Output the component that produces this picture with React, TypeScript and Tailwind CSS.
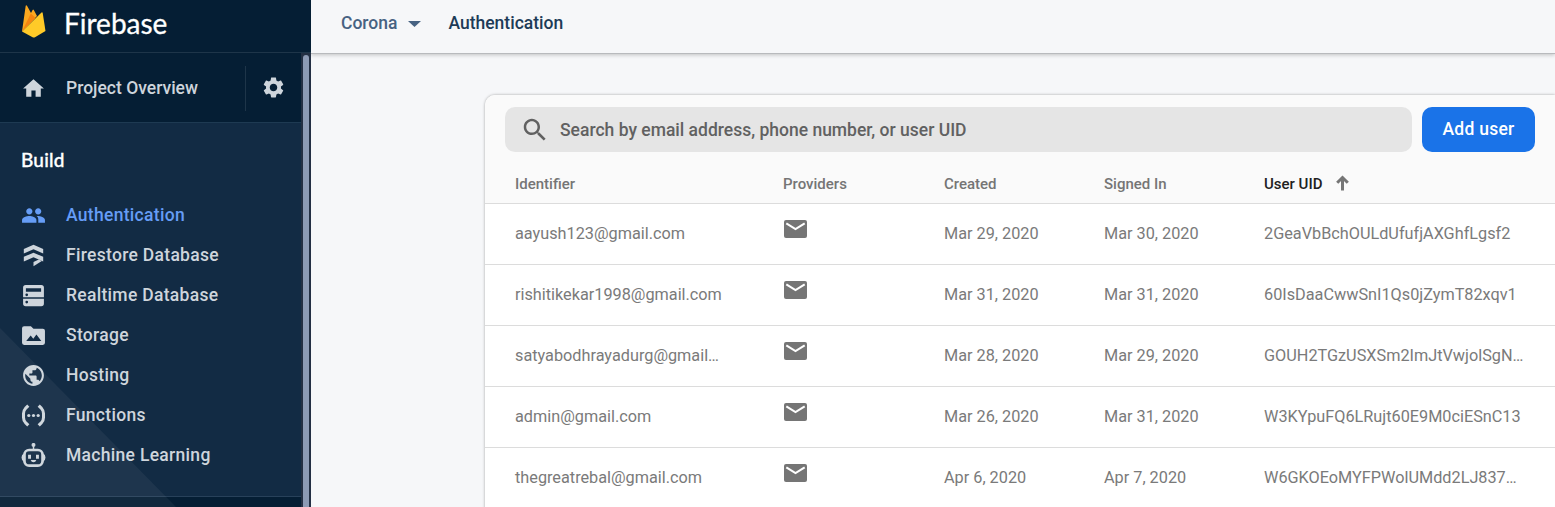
import type { ReactNode } from "react";

const Svg = ({ children, className = "size-[25px]" }: { children: ReactNode; className?: string }) => (
  <svg viewBox="0 0 24 24" fill="currentColor" className={`shrink-0 ${className}`}>
    {children}
  </svg>
);

const navItems: { label: string; active?: boolean; icon: ReactNode }[] = [
  {
    label: "Authentication",
    active: true,
    icon: (
      <path d="M16.500 11c1.660 0 2.990-1.340 2.990-3S18.160 5 16.500 5c-1.660 0-3 1.340-3 3s1.340 3 3 3zm-8.500 0c1.660 0 2.990-1.340 2.990-3S9.660 5 8 5C6.340 5 5 6.340 5 8s1.340 3 3 3zm0 1.500c-2.330 0-7 1.170-7 3.700V19h13.800v-2.800c0-2.530-4.470-3.700-6.800-3.700zm8 0c-.290 0-.620.020-.970.050 1.160.840 1.570 1.970 1.570 3.450V19H23v-2.800c0-2.530-4.670-3.700-7-3.700z" />
    ),
  },
  {
    label: "Firestore Database",
    icon: (
      <>
        <path d="M12 1.700l9.300 4v4.400L12 6.100 2.700 10.100V5.700z" />
        <path d="M12 9.300l9.300 4v4.400L12 13.700l-9.300 4v-4.400z" />
        <path d="M12 18.200l5-2.400 3 1.400-8 5z" />
      </>
    ),
  },
  {
    label: "Realtime Database",
    icon: (
      <path
        fillRule="evenodd"
        d="M4.500 1.800h15a2.500 2.500 0 0 1 2.500 2.500v9.400H2V4.300a2.500 2.500 0 0 1 2.500-2.500zM4.700 5v3.300h14.600V5zM5.500 10a1.300 1.300 0 1 0 0 2.600 1.300 1.300 0 0 0 0-2.600zM2 15h20v4.700a2.500 2.500 0 0 1-2.500 2.500h-15A2.500 2.500 0 0 1 2 19.700zm3.500 2a1.300 1.300 0 1 0 0 2.600 1.300 1.300 0 0 0 0-2.600z"
      />
    ),
  },
  {
    label: "Storage",
    icon: (
      <path
        fillRule="evenodd"
        d="M3 3h6.500l2.500 2.500h9a2 2 0 0 1 2 2V19a2 2 0 0 1-2 2H3a2 2 0 0 1-2-2V5a2 2 0 0 1 2-2zm2 14.200h14.500L14.800 11l-3 4-2.500-3z"
      />
    ),
  },
  {
    label: "Hosting",
    icon: (
      <path d="M12 2C6.480 2 2 6.480 2 12s4.480 10 10 10 10-4.480 10-10S17.520 2 12 2zM4 12c0-.610.080-1.210.210-1.780L8.990 15v1c0 1.100.900 2 2 2v1.930C7.060 19.430 4 16.070 4 12zm13.890 5.400c-.260-.810-1-1.400-1.900-1.400h-1v-3c0-.550-.450-1-1-1h-6v-2h2c.550 0 1-.450 1-1V7h2c1.100 0 2-.900 2-2v-.410C17.920 5.770 20 8.650 20 12c0 2.080-.810 3.980-2.110 5.400z" />
    ),
  },
  {
    label: "Functions",
    icon: (
      <>
        <path
          d="M7 2.500L4.300 5.200Q2.400 7.200 2.400 10v4q0 2.800 1.900 4.800L7 21.500M17 2.500l2.700 2.700q1.900 2 1.900 4.800v4q0 2.800-1.900 4.800L17 21.500"
          fill="none"
          stroke="currentColor"
          strokeWidth="2.900"
        />
        <circle cx="7.500" cy="12" r="1.550" />
        <circle cx="12" cy="12" r="1.550" />
        <circle cx="16.500" cy="12" r="1.550" />
      </>
    ),
  },
  {
    label: "Machine Learning",
    icon: (
      <>
        <rect x="3.300" y="6.700" width="17.400" height="15" rx="4.500" fill="none" stroke="currentColor" strokeWidth="2.600" />
        <circle cx="12" cy="1.800" r="1.900" />
        <path d="M11.300 2h1.400v4h-1.400zM2.800 10v8Q.5 17 .5 14t2.300-4zM21.200 10v8q2.300-1 2.300-4t-2.300-4zM6.800 11.200h2.800v3.800H6.800zM14.400 11.200h2.800v3.800h-2.800zM9.300 16.300h5.400q-.7 2.200-2.700 2.200t-2.700-2.200z" />
      </>
    ),
  },
];

const users = [
  ["aayush123@gmail.com", "Mar 29, 2020", "Mar 30, 2020", "2GeaVbBchOULdUfufjAXGhfLgsf2"],
  ["rishitikekar1998@gmail.com", "Mar 31, 2020", "Mar 31, 2020", "60IsDaaCwwSnI1Qs0jZymT82xqv1"],
  ["satyabodhrayadurg@gmail…", "Mar 28, 2020", "Mar 29, 2020", "GOUH2TGzUSXSm2ImJtVwjolSgN…"],
  ["admin@gmail.com", "Mar 26, 2020", "Mar 31, 2020", "W3KYpuFQ6LRujt60E9M0ciESnC13"],
  ["thegreatrebal@gmail.com", "Apr 6, 2020", "Apr 7, 2020", "W6GKOEoMYFPWolUMdd2LJ837…"],
];

function FirebaseLogo() {
  return (
    <svg viewBox="0 0 24 33" className="h-[33px] w-6 shrink-0">
      <path d="M0 26.500L3.700.8Q4.200-.4 5 .7l4 7.300 1.600-3q.6-1 1.200 0L15 11z" fill="#fba81f" />
      <path d="M0 26.500L8.800 8.500 13.500 13z" fill="#f58410" />
      <path d="M0 26.500L19.500 7.500q.9-.8 1.200.4L23.500 26 13 32.300q-1.200.6-2.400 0z" fill="#ffca28" />
    </svg>
  );
}

function Sidebar() {
  return (
    <aside className="flex h-full w-[311px] shrink-0 flex-col overflow-hidden bg-[#051e34] text-[#ced5dc]">
      <div className="flex h-[53px] shrink-0 border-b border-[#1e3549] pl-[22px] pt-[5px]">
        <FirebaseLogo />
        <span className="ml-[18px] font-['Lato',sans-serif] text-[28px] leading-[37px] text-white [-webkit-text-stroke:0.3px_white]">
          Firebase
        </span>
      </div>
      <div className="flex min-h-0 flex-1">
        <div className="relative flex w-[301px] flex-col overflow-hidden">
          <div className="flex h-[70px] shrink-0 items-center border-b border-[#1e3a52] pl-[21px] pt-px">
            <Svg>
              <path d="M10 20v-6h4v6h5v-8h3L12 3 2 12h3v8z" />
            </Svg>
            <span className="ml-5 w-[179px] text-[17.5px] font-medium">Project Overview</span>
            <div className="flex h-[45px] items-center border-l border-[#1e3549] pb-[2px] pl-[15px]">
              <Svg>
                <path d="M19.140 12.940c.040-.300.060-.610.060-.940 0-.320-.020-.640-.070-.940l2.030-1.580c.180-.140.230-.410.120-.610l-1.920-3.320c-.120-.220-.370-.290-.590-.220l-2.390.960c-.500-.380-1.030-.700-1.620-.940l-.360-2.540c-.040-.240-.240-.410-.480-.410h-3.840c-.240 0-.430.170-.470.410l-.360 2.540c-.590.240-1.130.570-1.620.940l-2.390-.960c-.220-.080-.470 0-.590.220L2.740 8.870c-.120.210-.080.470.120.610l2.030 1.580c-.050.300-.090.630-.090.940s.020.640.070.940l-2.030 1.580c-.180.140-.230.410-.120.610l1.920 3.320c.120.220.370.290.590.220l2.390-.960c.500.380 1.030.700 1.620.940l.360 2.540c.050.240.240.410.480.410h3.840c.240 0 .440-.170.470-.410l.360-2.540c.590-.240 1.130-.560 1.620-.940l2.390.960c.220.080.470 0 .590-.220l1.920-3.320c.120-.220.070-.470-.120-.610l-2.010-1.580zM12 15.600c-1.980 0-3.600-1.620-3.600-3.600s1.620-3.600 3.600-3.600 3.600 1.620 3.600 3.600-1.620 3.600-3.600 3.600z" />
              </Svg>
            </div>
          </div>
          <div className="h-[374px] shrink-0 border-b border-[#28415a] bg-[#122b44] pt-[22px]">
            <h2 className="pl-[21px] font-['Lato',sans-serif] text-[19px] font-medium leading-[30px] tracking-[0.2px] text-white [-webkit-text-stroke:0.35px_white]">
              Build
            </h2>
            <nav className="mt-5">
              {navItems.map((item) => (
                <a
                  key={item.label}
                  className={`flex h-10 items-center pl-[21px] text-[17.5px] font-medium tracking-[0.3px] ${
                    item.active ? "text-[#669df6]" : ""
                  }`}
                >
                  <Svg>{item.icon}</Svg>
                  <span className="ml-5">{item.label}</span>
                </a>
              ))}
            </nav>
          </div>
          <svg viewBox="0 0 176 179" className="pointer-events-none absolute bottom-0 left-0 h-[179px] w-44">
            <path d="M0 0L176 179H0z" fill="#fff" fillOpacity="0.05" />
          </svg>
        </div>
        <div className="flex w-[10px] justify-center bg-[#232f43] pt-[2px]">
          <div className="w-[6px] rounded-t-[3px] bg-[#8c9ab4]" />
        </div>
      </div>
    </aside>
  );
}

function UsersCard() {
  const grid = "grid grid-cols-[268px_161px_160px_160px_291px] pl-[30px]";
  return (
    <section className="ml-[174px] mt-[41px] overflow-hidden rounded-tl-[10px] bg-white shadow-[0_0_3px_rgba(0,0,0,0.35)]">
      <div className="h-[109px] border-b border-[#dcdcdc] bg-[#fafafa] pt-3">
        <div className="flex gap-[10px] pl-5">
          <div className="flex h-[45px] w-[907px] items-center rounded-[10px] bg-[#e5e5e5] pl-[15px] text-[#616161]">
            <Svg className="size-[30px]">
              <path d="M15.500 14h-.790l-.280-.270C15.410 12.590 16 11.110 16 9.500 16 5.910 13.090 3 9.500 3S3 5.910 3 9.500 5.910 16 9.500 16c1.610 0 3.090-.590 4.230-1.570l.270.280v.790l5 4.990L20.490 19l-4.990-5zm-6 0C7.010 14 5 11.990 5 9.500S7.010 5 9.500 5 14 7.010 14 9.500 11.990 14 9.500 14z" />
            </Svg>
            <span className="ml-[10px] pt-[2px] text-[17.5px] font-medium">Search by email address, phone number, or user UID</span>
          </div>
          <button className="h-[45px] w-[113px] rounded-[10px] bg-[#1a73e8] pb-px text-[17.5px] font-medium tracking-[0.25px] text-white">
            Add user
          </button>
        </div>
        <div className={`${grid} mt-[17px] text-[15px] font-medium leading-[30px] text-[#757575]`}>
          <span>Identifier</span>
          <span>Providers</span>
          <span>Created</span>
          <span>Signed In</span>
          <span className="flex items-center text-[#212121]">
            User UID
            <svg viewBox="0 0 13 16" className="-mt-[2px] ml-[14px] h-4 w-[13px]">
              <path d="M6.500 15.500V3M1.200 7.800L6.500 2.500l5.300 5.300" fill="none" stroke="#757575" strokeWidth="3" />
            </svg>
          </span>
        </div>
      </div>
      {users.map(([email, created, signedIn, uid]) => (
        <div key={email} className={`${grid} h-[61px] border-b border-[#dcdcdc] text-[16.25px] leading-[60px] text-[#7a7a7a]`}>
          <span>{email}</span>
          <span className="pt-[15.500px] text-[#757575]">
            <svg viewBox="0 0 23 18" className="ml-[1px] h-[18px] w-[23px]">
              <rect width="23" height="18" rx="2" fill="currentColor" />
              <path d="M2.300 3.300l9.200 5.800 9.200-5.800" fill="none" stroke="#fff" strokeWidth="2.100" />
            </svg>
          </span>
          <span>{created}</span>
          <span>{signedIn}</span>
          <span>{uid}</span>
        </div>
      ))}
    </section>
  );
}

export default function App() {
  return (
    <div className="flex h-[507px] w-[1555px] overflow-hidden whitespace-nowrap bg-[#f6f7f9] font-['Roboto',sans-serif]">
      <Sidebar />
      <main className="min-w-0 flex-1 overflow-hidden">
        <header className="flex h-[54px] items-center border-b border-[#b8babd] pb-[7px] pl-[30px] text-[17.5px] font-medium shadow-[0_1px_4px_rgba(0,0,0,0.22)]">
          <span className="text-[#476282]">Corona</span>
          <svg viewBox="0 0 13 6" className="ml-[11px] mt-[2px] h-[6px] w-[13px]">
            <path d="M0 0h13L6.500 6z" fill="#476282" />
          </svg>
          <span className="ml-[27px] text-[#1d3b57]">Authentication</span>
        </header>
        <UsersCard />
      </main>
    </div>
  );
}
